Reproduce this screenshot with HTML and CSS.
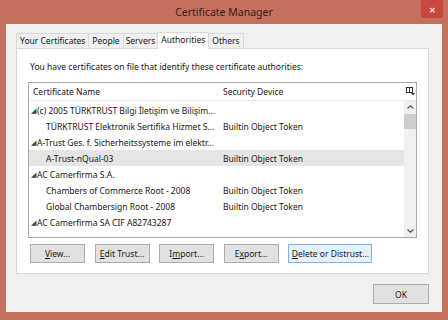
FILE: index.html
```html
<!DOCTYPE html>
<html lang="en">
<head>
  <meta charset="UTF-8" />
  <title>Certificate Manager</title>
  <link rel="stylesheet" href="styles.css">
</head>
<body>
  <div class="window">
    <div class="titlebar">
      <span></span>
      <span class="title">Certificate Manager</span>
      <span class="close-wrap"><span class="close">&#x2715;</span></span>
    </div>

    <div class="client">
      <div class="tabs">
        <div class="tab">Your Certificates</div>
        <div class="tab">People</div>
        <div class="tab">Servers</div>
        <div class="tab active">Authorities</div>
        <div class="tab">Others</div>
      </div>

      <div class="panel">
        <p class="intro">You have certificates on file that identify these certificate authorities:</p>

        <div class="list">
          <div class="list-head">
            <div class="col-name">Certificate Name</div>
            <div class="col-device">Security Device</div>
            <div class="picker">
              <svg width="9" height="9" viewBox="0 0 9 9">
                <rect x="0.5" y="0.5" width="6" height="5" fill="none" stroke="#333"/>
                <line x1="3.5" y1="0.5" x2="3.5" y2="5.5" stroke="#333"/>
                <path d="M5 6 L9 6 L7 8.5 Z" fill="#333"/>
              </svg>
            </div>
          </div>
          <div class="list-body">
            <div class="rows">
              <div class="row group"><div class="col-name"><span class="tw">&#x25E2;</span>(c) 2005 TÜRKTRUST Bilgi İletişim ve Bilişim...</div><div class="col-device"></div></div>
              <div class="row child"><div class="col-name">TÜRKTRUST Elektronik Sertifika Hizmet S...</div><div class="col-device">Builtin Object Token</div></div>
              <div class="row group"><div class="col-name"><span class="tw">&#x25E2;</span>A-Trust Ges. f. Sicherheitssysteme im elektr...</div><div class="col-device"></div></div>
              <div class="row child selected"><div class="col-name">A-Trust-nQual-03</div><div class="col-device">Builtin Object Token</div></div>
              <div class="row group"><div class="col-name"><span class="tw">&#x25E2;</span>AC Camerfirma S.A.</div><div class="col-device"></div></div>
              <div class="row child"><div class="col-name">Chambers of Commerce Root - 2008</div><div class="col-device">Builtin Object Token</div></div>
              <div class="row child"><div class="col-name">Global Chambersign Root - 2008</div><div class="col-device">Builtin Object Token</div></div>
              <div class="row group"><div class="col-name"><span class="tw">&#x25E2;</span>AC Camerfirma SA CIF A82743287</div><div class="col-device"></div></div>
            </div>
            <div class="scrollbar">
              <div class="arrow">
                <svg width="7" height="4" viewBox="0 0 7 4"><path d="M0.5 3.5 L3.5 0.8 L6.5 3.5" fill="none" stroke="#555" stroke-width="1.2"/></svg>
              </div>
              <div class="thumb"></div>
              <div class="track"></div>
              <div class="arrow">
                <svg width="7" height="4" viewBox="0 0 7 4"><path d="M0.5 0.5 L3.5 3.2 L6.5 0.5" fill="none" stroke="#555" stroke-width="1.2"/></svg>
              </div>
            </div>
          </div>
        </div>

        <div class="buttons">
          <button class="btn"><u>V</u>iew...</button>
          <button class="btn"><u>E</u>dit Trust...</button>
          <button class="btn">I<u>m</u>port...</button>
          <button class="btn">E<u>x</u>port...</button>
          <button class="btn wide focused"><u>D</u>elete or Distrust...</button>
        </div>
      </div>

      <div class="footer">
        <button class="btn ok">OK</button>
      </div>
    </div>
  </div>
</body>
</html>
```

FILE: styles.css
```css
body {
  margin: 0;
  font-family: "Noto Sans", "Open Sans", sans-serif;
  font-size: 8.5px;
  color: #161616;
}

.window {
  width: 448px;
  height: 320px;
  box-sizing: border-box;
  background-color: #c3705f;
  padding: 0 6px 8px 6px;
  display: flex;
  flex-direction: column;
}

/* Title bar */
.titlebar {
  height: 24px;
  display: grid;
  grid-template-columns: 1fr auto 1fr;
  align-items: start;
}

.title {
  font-size: 10.5px;
  color: #3b1a12;
  line-height: 24px;
}

.close-wrap {
  display: flex;
  justify-content: flex-end;
}

.close {
  width: 22px;
  height: 18px;
  margin-right: -1px;
  background-color: #c8473e;
  color: #f4e2de;
  font-size: 8px;
  font-weight: bold;
  display: flex;
  align-items: center;
  justify-content: center;
}

/* Client area */
.client {
  flex: 1;
  background-color: #f0f0f0;
  padding: 9px 13px 0 10px;
  display: flex;
  flex-direction: column;
}

.tabs {
  display: flex;
  align-items: flex-end;
  height: 15px;
  position: relative;
  z-index: 1;
}

.tab {
  height: 15px;
  box-sizing: border-box;
  padding: 0 3px;
  border: 1px solid #d9d9d9;
  border-bottom: none;
  border-right: none;
  background-color: #f0f0f0;
  line-height: 14px;
}

.tab:nth-child(3) {
  padding: 0 2px;
}

.tab:last-child {
  border-right: 1px solid #d9d9d9;
}

.tab.active {
  height: 17px;
  margin-bottom: -1px;
  background-color: #fff;
  border-right: 1px solid #d9d9d9;
  padding: 0 3px;
  line-height: 14px;
}

.tab.active + .tab {
  border-left: none;
}

.panel {
  height: 226px;
  box-sizing: border-box;
  background-color: #fff;
  border: 1px solid #d9d9d9;
  padding: 0 11px 0 11px;
}

.intro {
  margin: 10px 0 0 2px;
  line-height: 15px;
}

/* Tree list */
.list {
  margin-top: 8px;
  height: 156px;
  box-sizing: border-box;
  border: 1px solid #a9a9a9;
  display: flex;
  flex-direction: column;
}

.list-head {
  height: 17px;
  display: flex;
  align-items: center;
  border-bottom: 1px solid #eaeaea;
}

.col-name {
  width: 190px;
  padding-left: 4px;
  white-space: nowrap;
  overflow: hidden;
}

.col-device {
  flex: 1;
  white-space: nowrap;
}

.picker {
  width: 12px;
  display: flex;
  justify-content: center;
}

.list-body {
  flex: 1;
  display: flex;
}

.rows {
  flex: 1;
  padding-top: 1px;
}

.row {
  height: 16px;
  display: flex;
  align-items: center;
}

.row.group .col-name {
  padding-left: 2px;
  width: 192px;
}

.row.child .col-name {
  padding-left: 17px;
  width: 177px;
}

.row.selected {
  background-color: #e5e5e5;
}

.tw {
  font-size: 6.5px;
  display: inline-block;
  width: 6px;
  vertical-align: 1px;
  color: #444;
}

.scrollbar {
  width: 12px;
  display: flex;
  flex-direction: column;
  background-color: #f0f0f0;
}

.arrow {
  height: 12px;
  display: flex;
  align-items: center;
  justify-content: center;
}

.thumb {
  height: 15px;
  margin: 1px 0 0 0;
  background-color: #cdcdcd;
}

.track {
  flex: 1;
}

/* Buttons */
.buttons {
  display: flex;
  gap: 9.6px;
  margin: 6px 0 0 2px;
}

.btn {
  width: 55px;
  height: 19px;
  padding: 0;
  font-family: "Noto Sans", "Open Sans", sans-serif;
  font-size: 8.5px;
  color: #161616;
  background-color: #e1e1e1;
  border: 1px solid #adadad;
}

.btn.wide {
  width: 84px;
}

.btn.focused {
  background-color: #e5f1fb;
  border-color: #7eb4ea;
}

.footer {
  display: flex;
  justify-content: flex-end;
  margin-top: 10px;
}

.btn.ok {
  width: 56px;
  height: 20px;
}
```
